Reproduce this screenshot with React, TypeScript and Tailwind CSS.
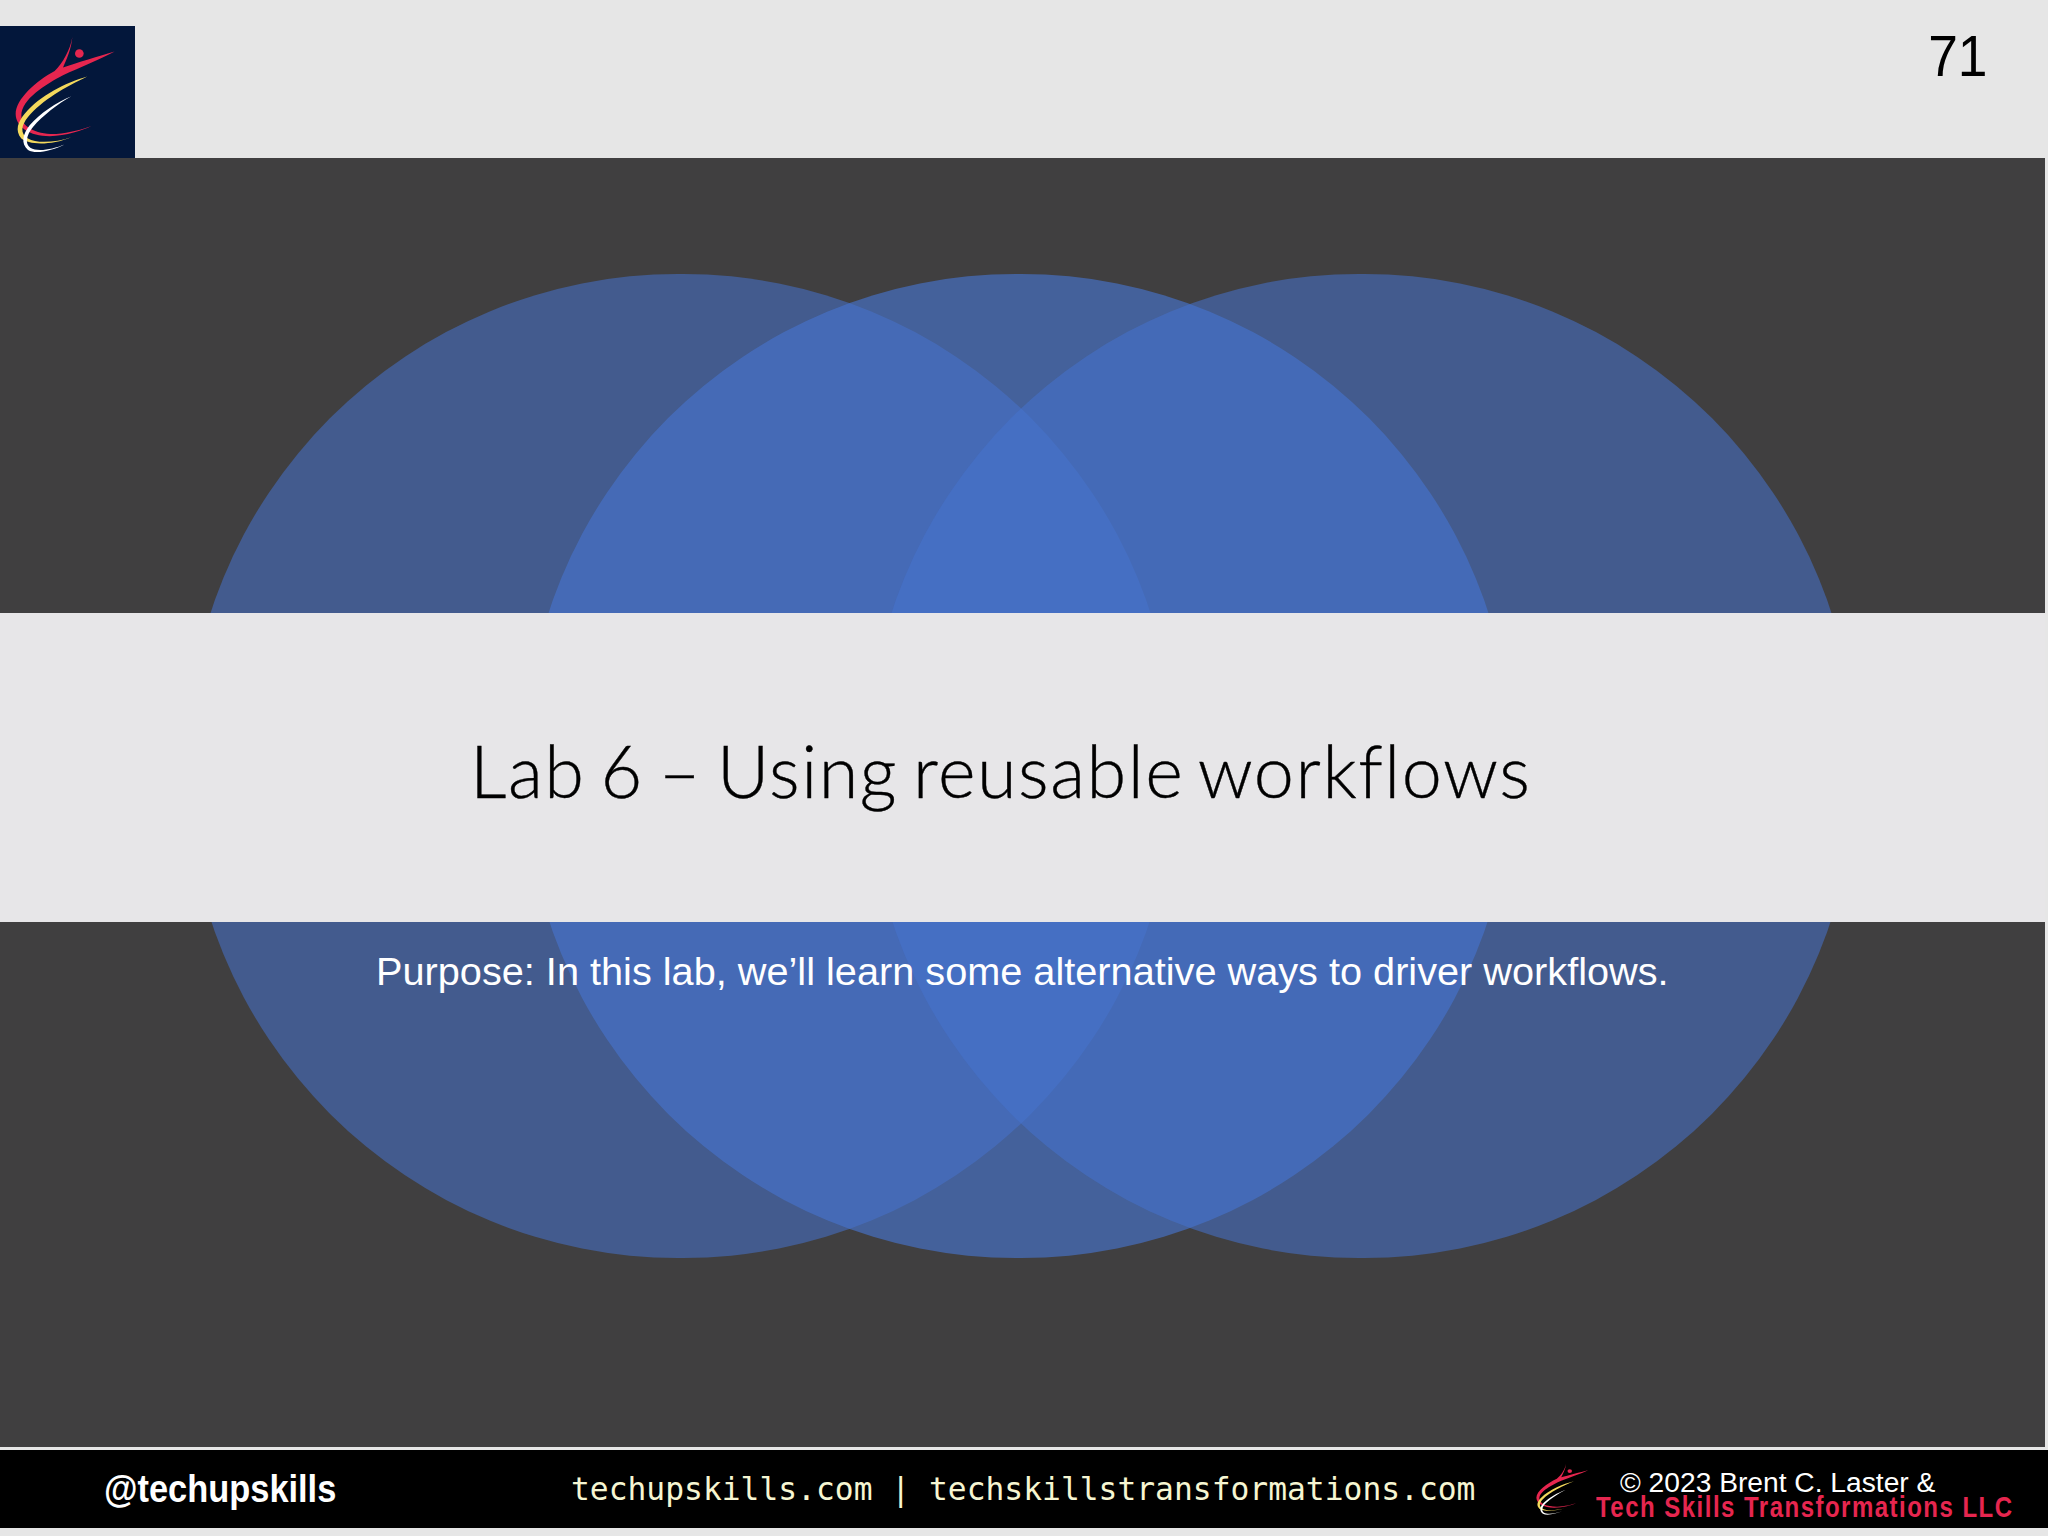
const Logo = ({ className }: { className: string }) => (
  <svg viewBox="40 100 315 370" preserveAspectRatio="none" className={className}>
    <path
      fill="#e6264f"
      d="M218 112 C215 150 200 180 190 205 C230 190 300 170 345 156 C300 180 240 205 190 228 C140 255 65 300 65 350 C65 385 110 408 170 406 C210 403 250 392 275 382 C250 395 200 412 150 413 C90 413 48 385 48 345 C48 300 110 245 165 215 C190 190 212 150 218 112 Z"
    />
    <circle cx="239" cy="162" r="13" fill="#e6264f" />
    <path
      fill="#f4d95c"
      d="M263 232 C200 250 120 290 75 345 C55 370 45 395 65 420 C85 438 150 443 215 416 C170 432 110 436 85 420 C60 405 65 380 85 355 C125 305 200 262 263 232 Z"
    />
    <path
      fill="#ffffff"
      d="M215 292 C170 310 120 345 90 380 C70 405 62 435 85 455 C110 470 160 455 195 438 C160 452 115 462 92 448 C75 435 80 410 100 385 C130 350 175 315 215 292 Z"
    />
  </svg>
);

const sans = "font-['Liberation_Sans',Arial,sans-serif]";

const App = () => {
  return (
    <div className={`w-[2048px] h-[1536px] overflow-hidden bg-[#e6e6e6] ${sans}`}>
      {/* top strip */}
      <div className="h-[158px] flex items-end justify-between">
        <div className="w-[135px] h-[132px] bg-[#03173b] pl-[13px] pt-[7px]">
          <Logo className="w-[105px] h-[122px]" />
        </div>
        <div className="self-start mt-[23px] mr-[60px] text-[58px] leading-[66px] text-black origin-right scale-x-[0.92]">71</div>
      </div>

      {/* main panel */}
      <div className="relative w-[2045px] h-[1289px] bg-[#403f40] overflow-hidden">
        <div className="absolute left-[186px] top-[116px] w-[989px] h-[984px] rounded-full bg-[#4673cd]/55" />
        <div className="absolute left-[524px] top-[116px] w-[989px] h-[984px] rounded-full bg-[#4673cd]/65" />
        <div className="absolute left-[867px] top-[116px] w-[989px] h-[984px] rounded-full bg-[#4673cd]/55" />

        <div className="relative mt-[455px] h-[309px] bg-[#e7e6e8] flex items-center pl-[470px] pt-[5px]">
          <h1 className="font-['Lato',sans-serif] font-light text-[72px] leading-none text-black whitespace-nowrap tracking-[1.5px] [word-spacing:-6px] [-webkit-text-stroke:0.4px_black]">
            Lab 6 – Using reusable workflows
          </h1>
        </div>
        <p className="relative mt-[26px] pl-[376px] text-[39.7px] leading-[46px] text-white whitespace-nowrap">
          Purpose: In this lab, we’ll learn some alternative ways to driver workflows.
        </p>
      </div>

      {/* footer */}
      <div className="mt-[3px] h-[78px] bg-black flex items-center">
        <div className="shrink-0 pl-[104px] w-[571px]">
          <div className="text-[38px] font-bold text-white whitespace-nowrap origin-left scale-x-[0.905]">@techupskills</div>
        </div>
        <div className="shrink-0 w-[964px] font-['DejaVu_Sans_Mono',monospace] text-[31.3px] text-[#f6f6d2] whitespace-nowrap">
          techupskills.com | techskillstransformations.com
        </div>
        <Logo className="shrink-0 w-[55px] h-[54px]" />
        <div className="shrink-0 ml-[6px] mt-[10px] flex flex-col w-[420px]">
          <div className="pl-[24px] text-[28.2px] leading-[26px] text-white whitespace-nowrap">© 2023 Brent C. Laster &amp;</div>
          <div className="text-[30px] leading-[24px] font-bold text-[#e6264f] whitespace-nowrap origin-left scale-x-[0.8] tracking-[1.85px]">
            Tech Skills Transformations LLC
          </div>
        </div>
      </div>
    </div>
  );
};

export default App;
